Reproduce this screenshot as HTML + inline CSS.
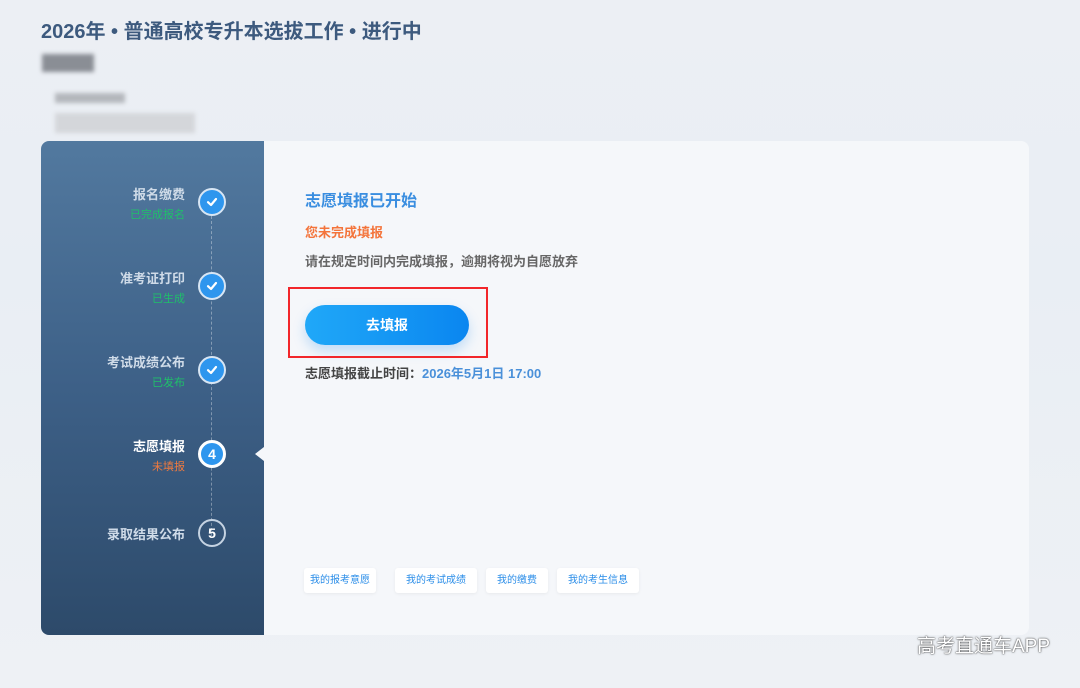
<!DOCTYPE html>
<html><head><meta charset="utf-8"><style>
*{margin:0;padding:0;box-sizing:border-box}
body{width:1080px;height:688px;overflow:hidden;font-family:"Liberation Sans","Noto Sans CJK SC",sans-serif;background:linear-gradient(180deg,#eceff4 0%,#e9eef4 40%,#eef1f5 100%);position:relative}
.t{position:absolute;left:41px;top:15px;font-size:20px;font-weight:bold;color:#3d5a7e}
.blur{position:absolute;background:#bfc3c9;filter:blur(2px)}
.card{position:absolute;left:41px;top:141px;width:988px;height:494px;border-radius:8px;overflow:hidden;background:#f5f7fa}
.side{position:absolute;left:0;top:0;width:223px;height:494px;background:linear-gradient(180deg,#52799f 0%,#3d6087 50%,#2d4a6a 100%)}
.line{position:absolute;left:170px;top:75px;height:320px;border-left:1px dashed rgba(255,255,255,.35)}
.c{position:absolute;left:157px;width:28px;height:28px;border-radius:50%;border:2px solid #d8e6f4;background:#2e96ee;color:#fff;text-align:center;font-size:14px;font-weight:bold;line-height:24px}
.c svg{position:absolute;left:6px;top:6px}
.lb{position:absolute;right:79px;text-align:right;font-size:13px;font-weight:bold;color:#cfdbe8}
.sb{position:absolute;right:79px;text-align:right;font-size:11px;color:#1fc06a}
.tri{position:absolute;left:214px;top:306px;width:0;height:0;border-top:7px solid transparent;border-bottom:7px solid transparent;border-right:9px solid #f5f7fa}
.m{position:absolute}
.btn{position:absolute;left:264px;top:164px;width:164px;height:40px;border-radius:20px;background:linear-gradient(90deg,#20a8f8,#0a86f0);color:#fff;font-size:14px;font-weight:bold;text-align:center;line-height:40px;box-shadow:0 6px 12px rgba(30,140,240,.25)}
.red{position:absolute;left:247px;top:146px;width:200px;height:71px;border:2px solid #f2262a}
.sm{position:absolute;top:427px;height:25px;background:#fff;border-radius:3px;font-size:10px;color:#2a8de8;text-align:center;line-height:25px;box-shadow:0 1px 3px rgba(0,0,0,.06)}
.wm{position:absolute;right:30px;bottom:30px;font-size:19px;color:#fff;text-shadow:0 0 1px #333,0 0 2px rgba(0,0,0,.6)}
</style></head><body>
<div class="t">2026年 • 普通高校专升本选拔工作 • 进行中</div>
<div class="blur" style="left:42px;top:54px;width:52px;height:18px;background:#8a8e95"></div>
<div class="blur" style="left:55px;top:93px;width:70px;height:10px;background:#b4b7bc"></div>
<div class="blur" style="left:55px;top:113px;width:140px;height:20px;background:#d4d6da"></div>
<div class="card">
<div class="side">
<div class="line"></div>
<div class="lb" style="top:43px">报名缴费</div><div class="sb" style="top:65px">已完成报名</div>
<div class="c" style="top:47px"><svg width="12" height="12" viewBox="0 0 12 12"><path d="M2 6.2L5 9L10 3" stroke="#fff" stroke-width="2.2" fill="none" stroke-linecap="round" stroke-linejoin="round"/></svg></div>
<div class="lb" style="top:127px">准考证打印</div><div class="sb" style="top:149px">已生成</div>
<div class="c" style="top:131px"><svg width="12" height="12" viewBox="0 0 12 12"><path d="M2 6.2L5 9L10 3" stroke="#fff" stroke-width="2.2" fill="none" stroke-linecap="round" stroke-linejoin="round"/></svg></div>
<div class="lb" style="top:211px">考试成绩公布</div><div class="sb" style="top:233px">已发布</div>
<div class="c" style="top:215px"><svg width="12" height="12" viewBox="0 0 12 12"><path d="M2 6.2L5 9L10 3" stroke="#fff" stroke-width="2.2" fill="none" stroke-linecap="round" stroke-linejoin="round"/></svg></div>
<div class="lb" style="top:295px;color:#fff">志愿填报</div><div class="sb" style="top:317px;color:#f07a3e">未填报</div>
<div class="c" style="top:299px;border-color:#fff;border-width:3px;line-height:22px">4</div>
<div class="lb" style="top:383px">录取结果公布</div>
<div class="c" style="top:378px;background:transparent;border-color:#c5d3e2">5</div>
<div class="tri"></div>
</div>
<div class="m" style="left:264px;top:46px;font-size:16px;font-weight:bold;color:#3a8ee0">志愿填报已开始</div>
<div class="m" style="left:264px;top:81px;font-size:13px;font-weight:bold;color:#f4743b">您未完成填报</div>
<div class="m" style="left:264px;top:110px;font-size:13px;font-weight:bold;color:#666">请在规定时间内完成填报，逾期将视为自愿放弃</div>
<div class="btn">去填报</div>
<div class="red"></div>
<div class="m" style="left:264px;top:222px;font-size:13px;font-weight:bold;color:#444">志愿填报截止时间：<span style="color:#4a90d9">2026年5月1日 17:00</span></div>
<div class="sm" style="left:263px;width:72px">我的报考意愿</div>
<div class="sm" style="left:354px;width:82px">我的考试成绩</div>
<div class="sm" style="left:445px;width:62px">我的缴费</div>
<div class="sm" style="left:516px;width:82px">我的考生信息</div>
</div>
<div class="wm">高考直通车APP</div>
</body></html>
